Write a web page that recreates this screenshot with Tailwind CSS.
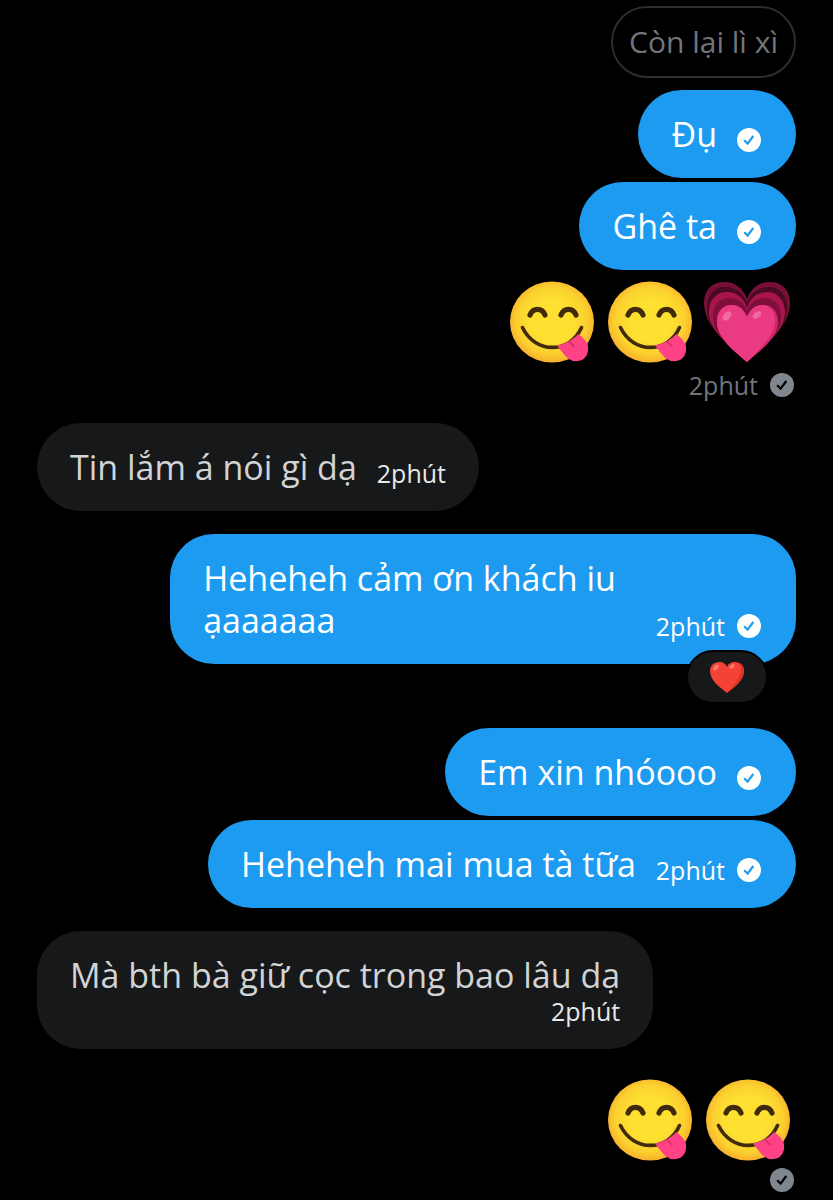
<!DOCTYPE html>
<html lang="vi">
<head>
  <meta charset="UTF-8" />
  <meta name="viewport" content="width=device-width, initial-scale=1.0"/>
  <title>Tin nhắn</title>
  <script src="https://cdn.jsdelivr.net/npm/@tailwindcss/browser@4"></script>
</head>
<body class="bg-black font-['Open_Sans',sans-serif]">

  <!-- Shared icons -->
  <svg class="absolute size-0" aria-hidden="true">
    <defs>
      <radialGradient id="face" cx="50%" cy="48%" r="52%">
        <stop offset="0.5" stop-color="#fde030"/>
        <stop offset="0.8" stop-color="#fbd02f"/>
        <stop offset="1" stop-color="#f7b02c"/>
      </radialGradient>
      <symbol id="yum" viewBox="0 0 84 82">
        <ellipse cx="42" cy="41" rx="42" ry="40.5" fill="url(#face)"/>
        <path d="M20 34 C23 26.500 32 26.500 35 34" fill="none" stroke="#422b0d" stroke-width="5.200" stroke-linecap="round"/>
        <path d="M51 34 C54 26.500 63 26.500 66 34" fill="none" stroke="#422b0d" stroke-width="5.200" stroke-linecap="round"/>
        <path d="M12.500 46.500 C25 73 60 73 71.500 46.500" fill="none" stroke="#422b0d" stroke-width="3.600" stroke-linecap="round"/>
        <path d="M47 64.500 Q60 62 68.500 53 Q74 57 77.500 63 Q80 73 73 78.500 Q65 82.500 58 77.500 Q54 74 47 64.500Z" fill="#ff4186"/>
        <path d="M59.500 61 L64 65.500" stroke="#d9306e" stroke-width="1.800" stroke-linecap="round"/>
      </symbol>
      <symbol id="growing-heart" viewBox="0 0 86 82">
        <path d="M43 70 C22 62 0 45 0 22 C0 8 9 1 20 1 C31 1 39 7 43 18 C47 7 55 1 66 1 C77 1 86 8 86 22 C86 45 64 62 43 70Z" fill="#780f38"/>
        <path d="M43 73 C22 63 3 47 3 27 C3 13 11 6 21 6 C32 6 39 12 43 22 C47 12 54 6 65 6 C75 6 83 13 83 27 C83 47 64 63 43 73Z" fill="#4a0a22"/>
        <path d="M43 76 C22 63 5 49 5 31 C5 18 13 11 23 11 C33 11 40 17 43 27 C46 17 53 11 63 11 C73 11 81 18 81 31 C81 49 64 63 43 76Z" fill="#a8154c"/>
        <path d="M43 79 C24 65 9 52 9 36 C9 23 16 17 25 17 C34 17 40 22 43 31 C46 22 52 17 61 17 C70 17 77 23 77 36 C77 52 62 65 43 79Z" fill="#7d0f3a"/>
        <path d="M43 81 C30 70 13 57 13 41 C13 30 19 24 28 24 C36 24 40 29 43 36 C46 29 51 24 59 24 C68 24 74 30 74 41 C74 57 56 70 43 81Z" fill="#d2266c"/>
        <path d="M43 81 C30 70 13 57 13 41 C13 30 19 24 28 24 C36 24 40 29 43 36 C46 29 50 24 58 24 C66 24 71 30 71 40 C71 55 55 69 43 81Z" fill="#ea3a82"/>
        <ellipse cx="23" cy="35" rx="3.500" ry="5.500" transform="rotate(42 23 35)" fill="#f06ba2"/>
        <ellipse cx="53" cy="34" rx="3" ry="5" transform="rotate(52 53 34)" fill="#f06ba2"/>
      </symbol>
      <symbol id="red-heart" viewBox="0 0 34 31">
        <path d="M17 31 C11 26 0 19 0 9 C0 3.500 4 0 9 0 C13 0 16 2 17 5 C18 2 21 0 25 0 C30 0 34 3.500 34 9 C34 19 23 26 17 31Z" fill="#f44336"/>
        <path d="M28 1 C32 4 32 10 29 15 C26 21 21 26 17 31 C23 26 34 19 34 9 C34 4 31 1 28 1Z" fill="#df3428"/>
        <ellipse cx="6" cy="5.500" rx="2" ry="3.500" transform="rotate(42 6 5.500)" fill="#ff7a6e"/>
        <ellipse cx="22" cy="4.500" rx="1.700" ry="3" transform="rotate(52 22 4.500)" fill="#ff7a6e"/>
      </symbol>
      <symbol id="sent" viewBox="0 0 24 24">
        <circle cx="12" cy="12" r="12" fill="currentColor"/>
        <path d="M7.200 12.300 L10.600 15.600 L16.300 8" fill="none" stroke="var(--tick)" stroke-width="2.200"/>
      </symbol>
    </defs>
  </svg>

  <main class="flex flex-col px-[37px] pt-1.5 text-[34px] leading-[42px] text-white">

    <!-- Quoted message -->
    <div class="self-end rounded-full border-2 border-[#2b2d30] px-4 py-[15px] text-[30px] leading-[38px] text-[#71767b]">Còn lại lì xì</div>

    <div class="mt-3 flex gap-5 self-end rounded-[44px] bg-[#1d9bf0] py-[23px] pr-[35px] pl-[33px]">
      <p>Đụ</p>
      <div class="flex h-[30px] items-center self-end [--tick:#1d9bf0]">
        <svg class="size-6" role="img" aria-label="Đã gửi"><use href="#sent"/></svg>
      </div>
    </div>

    <div class="mt-1 flex gap-5 self-end rounded-[44px] bg-[#1d9bf0] py-[23px] pr-[35px] pl-[33px]">
      <p>Ghê ta</p>
      <div class="flex h-[30px] items-center self-end [--tick:#1d9bf0]">
        <svg class="size-6" role="img" aria-label="Đã gửi"><use href="#sent"/></svg>
      </div>
    </div>

    <!-- Emoji only message -->
    <div class="mt-1 flex flex-col items-end">
      <div class="flex h-24 items-center gap-3.5 pr-1.5">
        <svg class="h-[82px] w-[84px]" role="img" aria-label="😋"><use href="#yum"/></svg>
        <svg class="h-[82px] w-[84px]" role="img" aria-label="😋"><use href="#yum"/></svg>
        <svg class="-ml-0.5 h-[82px] w-[86px]" role="img" aria-label="💗"><use href="#growing-heart"/></svg>
      </div>
      <div class="flex items-center gap-3 pr-0.5 text-[25px] leading-[30px] text-[#71767b]">
        <span>2phút</span>
        <svg class="size-6 text-[#80868d] [--tick:#000]" role="img" aria-label="Đã gửi"><use href="#sent"/></svg>
      </div>
    </div>

    <!-- Received -->
    <div class="mt-[23px] flex gap-5 self-start rounded-[44px] bg-[#16181a] px-[33px] py-[23px]">
      <p class="text-[#d2d3d4]">Tin lắm á nói gì dạ</p>
      <span class="self-end text-[25px] leading-[30px] text-[#e7e9ea]">2phút</span>
    </div>

    <!-- Message with a reaction -->
    <div class="relative mt-[23px] flex gap-10 self-end rounded-[44px] bg-[#1d9bf0] py-[23px] pr-[35px] pl-[33px]">
      <p>Heheheh cảm ơn khách iu<br>ạaaaaaa</p>
      <div class="flex items-center gap-3 self-end text-[25px] leading-[30px] [--tick:#1d9bf0]">
        <span>2phút</span>
        <svg class="size-6" role="img" aria-label="Đã gửi"><use href="#sent"/></svg>
      </div>
      <button type="button" aria-label="❤️" class="absolute right-7 -bottom-10 flex h-[54px] w-[82px] items-center justify-center rounded-full border-2 border-black bg-[#16181a]">
        <svg class="h-[31px] w-[34px]" aria-hidden="true"><use href="#red-heart"/></svg>
      </button>
    </div>

    <div class="mt-16 flex gap-5 self-end rounded-[44px] bg-[#1d9bf0] py-[23px] pr-[35px] pl-[33px]">
      <p>Em xin nhóooo</p>
      <div class="flex h-[30px] items-center self-end [--tick:#1d9bf0]">
        <svg class="size-6" role="img" aria-label="Đã gửi"><use href="#sent"/></svg>
      </div>
    </div>

    <div class="mt-1 flex gap-5 self-end rounded-[44px] bg-[#1d9bf0] py-[23px] pr-[35px] pl-[33px]">
      <p>Heheheh mai mua tà tữa</p>
      <div class="flex items-center gap-3 self-end text-[25px] leading-[30px] [--tick:#1d9bf0]">
        <span>2phút</span>
        <svg class="size-6" role="img" aria-label="Đã gửi"><use href="#sent"/></svg>
      </div>
    </div>

    <!-- Received -->
    <div class="mt-[23px] flex flex-col self-start rounded-[44px] bg-[#16181a] px-[33px] py-[23px]">
      <p class="text-[#d2d3d4]">Mà bth bà giữ cọc trong bao lâu dạ</p>
      <span class="self-end text-[25px] leading-[30px] text-[#e7e9ea]">2phút</span>
    </div>

    <!-- Emoji only message -->
    <div class="mt-[23px] flex flex-col items-end">
      <div class="flex h-24 items-center gap-3.5 pr-1.5">
        <svg class="h-[82px] w-[84px]" role="img" aria-label="😋"><use href="#yum"/></svg>
        <svg class="h-[82px] w-[84px]" role="img" aria-label="😋"><use href="#yum"/></svg>
      </div>
      <svg class="mr-0.5 size-6 text-[#80868d] [--tick:#000]" role="img" aria-label="Đã gửi"><use href="#sent"/></svg>
    </div>

  </main>

</body>
</html>
